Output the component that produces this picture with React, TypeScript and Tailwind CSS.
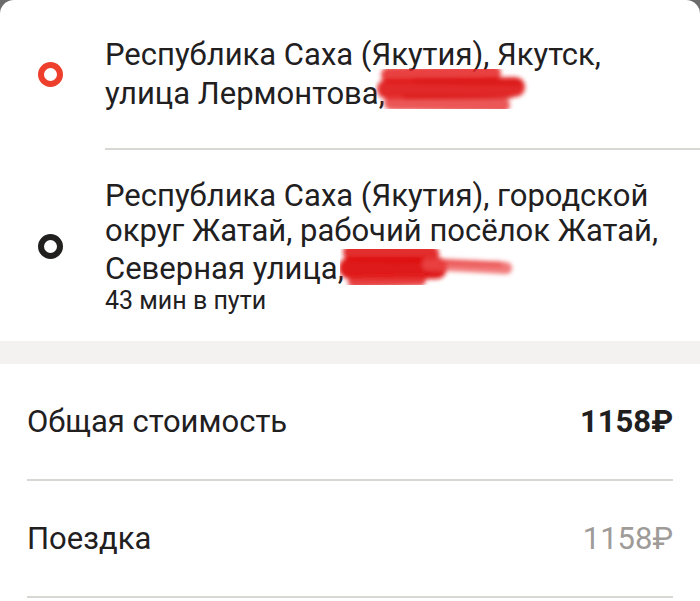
import React from 'react';

const font = { fontFamily: 'Roboto, "Noto Sans", sans-serif' };

function Ring({ color }: { color: string }) {
  return (
    <div className="w-[98px] shrink-0 flex justify-center pl-[2px]">
      <div className={`w-[25px] h-[25px] rounded-full border-[6px] ${color}`} />
    </div>
  );
}

// redaction marks drawn over the house numbers
function Scribble({ variant }: { variant: 1 | 2 }) {
  return (
    <span className="relative inline-block w-[4px] h-[1em]">
      {variant === 1 ? (
        <svg className="absolute left-[-10px] top-[-12px]" width="160" height="56" viewBox="0 0 160 56">
          <defs>
            <filter id="b1"><feGaussianBlur stdDeviation="2" /></filter>
          </defs>
          <g filter="url(#b1)" strokeLinecap="round" fill="none">
            <path d="M14 14 L118 12" stroke="#e52222" strokeWidth="16" opacity="0.85" />
            <path d="M12 28 L140 26" stroke="#e01616" strokeWidth="20" opacity="0.92" />
            <path d="M16 42 L128 44" stroke="#e62a2a" strokeWidth="14" opacity="0.8" />
            <path d="M40 20 L145 22" stroke="#d91313" strokeWidth="5" opacity="0.8" />
            <path d="M30 36 L135 36" stroke="#d91313" strokeWidth="4" opacity="0.7" />
          </g>
        </svg>
      ) : (
        <svg className="absolute left-[-4px] top-[-14px]" width="180" height="60" viewBox="0 0 180 60">
          <defs>
            <filter id="b2"><feGaussianBlur stdDeviation="2.2" /></filter>
          </defs>
          <g filter="url(#b2)" strokeLinecap="round" fill="none">
            <path d="M12 18 L90 20" stroke="#e01414" strokeWidth="18" opacity="0.9" />
            <path d="M10 34 L96 34" stroke="#dd1010" strokeWidth="22" opacity="0.95" />
            <path d="M14 48 L80 46" stroke="#e32020" strokeWidth="12" opacity="0.85" />
            <path d="M88 30 L166 34" stroke="#ec4d4d" strokeWidth="12" opacity="0.75" />
            <path d="M100 28 L160 30" stroke="#e83a3a" strokeWidth="5" opacity="0.6" />
          </g>
        </svg>
      )}
    </span>
  );
}

function PriceRow({ label, value, bold }: { label: string; value: string; bold?: boolean }) {
  return (
    <div className="mx-[27px] border-b-2 border-[#d9d7d4] h-[117px] flex items-center justify-between pt-[2px]">
      <span className="text-[31px] text-[#21201f]">{label}</span>
      <span className={bold ? 'text-[31px] font-bold text-[#21201f]' : 'text-[31px] text-[#9e9b98]'}>{value}</span>
    </div>
  );
}

export default function App() {
  return (
    <div className="w-[700px] h-[601px] overflow-hidden bg-[#6b6b6b]" style={font}>
      <div className="bg-white rounded-t-[14px]">
        {/* pickup point */}
        <div className="flex items-center pt-[36px] pb-[36px]">
          <Ring color="border-[#ee3f2c]" />
          <div className="pl-[7px] text-[31px] leading-[37px] text-[#21201f]">
            Республика Саха (Якутия), Якутск,
            <br />
            улица Лермонтова,
            <Scribble variant={1} />
          </div>
        </div>
        <div className="ml-[105px] h-[2px] bg-[#d9d7d4]" />
        {/* destination */}
        <div className="flex items-center pt-[28px] pb-[26px]">
          <Ring color="border-[#21201f]" />
          <div className="pl-[7px] text-[#21201f]">
            <div className="text-[31px] leading-[35px]">
              Республика Саха (Якутия), городской
              <br />
              округ Жатай, рабочий посёлок Жатай,
              <br />
              Северная улица,
              <Scribble variant={2} />
            </div>
            <div className="text-[25px] leading-[28px] mt-[1px]">43 мин в пути</div>
          </div>
        </div>
      </div>
      <div className="h-[23px] bg-[#f3f2f0]" />
      <div className="bg-white pb-[40px]">
        <PriceRow label="Общая стоимость" value="1158₽" bold />
        <PriceRow label="Поездка" value="1158₽" />
      </div>
    </div>
  );
}
